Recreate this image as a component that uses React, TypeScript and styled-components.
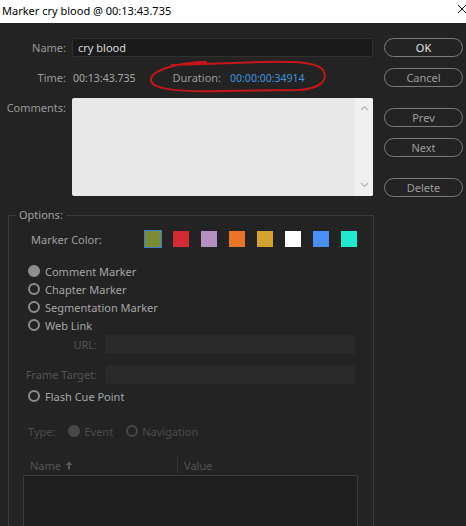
import React from 'react';
import styled, { createGlobalStyle } from 'styled-components';

const Global = createGlobalStyle`
  html, body {
    margin: 0;
    background: #232323;
  }
  body {
    font-family: "Noto Sans", "Open Sans", sans-serif;
    font-size: 11px;
  }
`;

// cores dos marcadores
const cores = ['#7b8c34', '#d42a36', '#b390bf', '#ea7529', '#d4a22c', '#ffffff', '#4a8ef6', '#1fe9cf'];

const tipos = ['Comment Marker', 'Chapter Marker', 'Segmentation Marker', 'Web Link'];

const App: React.FC = () => {
  return (
    <Window>
      <Global />
      <TitleBar>
        <Title>Marker cry blood @ 00:13:43.735</Title>
        <svg width="10" height="10" viewBox="0 0 10 10">
          <path d="M1 1 L9 9 M9 1 L1 9" stroke="#111" strokeWidth="1" />
        </svg>
      </TitleBar>

      <Body>
        <Top>
          <Form>
            <Row>
              <Label>Name:</Label>
              <NameInput defaultValue="cry blood" />
            </Row>
            <Row>
              <Label>Time:</Label>
              <TimeValue>00:13:43.735</TimeValue>
              <DurationLabel>Duration:</DurationLabel>
              <DurationValue>00:00:00:34914</DurationValue>
            </Row>
            <Row $top>
              <Label $pad>Comments:</Label>
              <Comments>
                <CommentText />
                <ScrollBar>
                  <svg width="9" height="6" viewBox="0 0 9 6">
                    <path d="M1 5 L4.5 1.5 L8 5" stroke="#b5b5b5" fill="none" strokeWidth="1.2" />
                  </svg>
                  <svg width="9" height="6" viewBox="0 0 9 6">
                    <path d="M1 1 L4.5 4.5 L8 1" stroke="#b5b5b5" fill="none" strokeWidth="1.2" />
                  </svg>
                </ScrollBar>
              </Comments>
            </Row>
          </Form>

          <Buttons>
            <PillButton $primary>OK</PillButton>
            <PillButton>Cancel</PillButton>
            <PillButton $space>Prev</PillButton>
            <PillButton>Next</PillButton>
            <PillButton $space>Delete</PillButton>
          </Buttons>
        </Top>

        <Options>
          <Legend>Options:</Legend>

          <ColorRow>
            <ColorLabel>Marker Color:</ColorLabel>
            {cores.map((c, i) => (
              <Swatch key={c} $cor={c} $ativo={i === 0} />
            ))}
          </ColorRow>

          <RadioList>
            {tipos.map((t, i) => (
              <RadioRow key={t}>
                <Radio $cheio={i === 0} />
                <span>{t}</span>
              </RadioRow>
            ))}
          </RadioList>

          <InputRow>
            <SmallLabel>URL:</SmallLabel>
            <DimInput />
          </InputRow>
          <InputRow $gap={11}>
            <SmallLabel>Frame Target:</SmallLabel>
            <DimInput />
          </InputRow>

          <RadioRow $mt={3}>
            <Radio />
            <span>Flash Cue Point</span>
          </RadioRow>

          <TypeRow>
            <span>Type:</span>
            <TypeOption>
              <Radio $cheio $apagado />
              <span>Event</span>
            </TypeOption>
            <TypeOption>
              <Radio $apagado />
              <span>Navigation</span>
            </TypeOption>
          </TypeRow>

          <TableHead>
            <HeadCell $w={147}>
              Name
              <svg width="8" height="9" viewBox="0 0 8 9">
                <path d="M4 0.5 L7.5 4 L5 4 L5 8.5 L3 8.5 L3 4 L0.5 4 Z" fill="#5a5a5a" />
              </svg>
            </HeadCell>
            <HeadCell $divider>Value</HeadCell>
          </TableHead>
          <Table />
        </Options>
      </Body>

      {/* marcação vermelha feita à mão sobre a duração */}
      <Annotation width="466" height="526" viewBox="0 0 466 526">
        <path
          d="M206 62 C182 62 153 69 151 79 C149 89 176 92 222 91 L298 90 C321 89 327 80 324 72 C321 63 300 61 262 62 L172 65"
          stroke="#c6161c"
          strokeWidth="2"
          fill="none"
          strokeLinecap="round"
        />
      </Annotation>
    </Window>
  );
};

export default App;

const Window = styled.div`
  position: relative;
  width: 466px;
  height: 526px;
  overflow: hidden;
  background: #232323;
`;

const TitleBar = styled.div`
  height: 23px;
  background: #ffffff;
  display: flex;
  align-items: center;
  justify-content: space-between;
  padding: 0 0 0 2px;
  box-sizing: border-box;
  svg {
    margin-right: -1px;
    margin-top: -6px;
  }
`;

const Title = styled.span`
  font-family: "Noto Sans", sans-serif;
  font-size: 11px;
  color: #000;
  margin-top: -2px;
`;

const Body = styled.div`
  padding-top: 15px;
`;

const Top = styled.div`
  display: flex;
  align-items: flex-start;
`;

const Form = styled.div`
  width: 373px;
  display: flex;
  flex-direction: column;
  gap: 11px;
`;

const Row = styled.div<{ $top?: boolean }>`
  display: flex;
  align-items: ${(p) => (p.$top ? 'flex-start' : 'center')};
  height: ${(p) => (p.$top ? '98px' : '19px')};
`;

const Label = styled.span<{ $pad?: boolean }>`
  width: 66px;
  padding-right: 6px;
  box-sizing: content-box;
  text-align: right;
  color: #9a9a9a;
  padding-top: ${(p) => (p.$pad ? '2px' : '0')};
`;

const NameInput = styled.input`
  flex: 1;
  height: 19px;
  box-sizing: border-box;
  background: #1a1a1a;
  border: 1px solid #303030;
  border-radius: 2px;
  color: #d8d8d8;
  font: inherit;
  padding: 0 5px;
  outline: none;
`;

const TimeValue = styled.span`
  color: #a8a8a8;
  margin-left: 1px;
  font-size: 10.5px;
`;

const DurationLabel = styled.span`
  color: #9a9a9a;
  margin-left: 37px;
`;

const DurationValue = styled.span`
  color: #3f93dd;
  margin-left: 9px;
  font-size: 10.5px;
`;

const Comments = styled.div`
  flex: 1;
  height: 98px;
  display: flex;
  background: #e8e8e8;
  border-radius: 2px;
  overflow: hidden;
`;

const CommentText = styled.div`
  flex: 1;
`;

const ScrollBar = styled.div`
  width: 18px;
  background: #f0f0f0;
  display: flex;
  flex-direction: column;
  justify-content: space-between;
  align-items: center;
  padding: 7px 0 8px;
`;

const Buttons = styled.div`
  margin-left: 11px;
  display: flex;
  flex-direction: column;
  gap: 11px;
`;

const PillButton = styled.button<{ $primary?: boolean; $space?: boolean }>`
  width: 79px;
  height: 19px;
  margin-top: ${(p) => (p.$space ? '10px' : '0')};
  background: transparent;
  border: 1px solid #7c7c7c;
  border-radius: 10px;
  color: ${(p) => (p.$primary ? '#e6e6e6' : '#9c9c9c')};
  font-family: "Noto Sans", sans-serif;
  font-size: 11px;
  padding: 0;
  line-height: 17px;
`;

const Options = styled.fieldset`
  margin: 11px 0 0 8px;
  width: 366px;
  box-sizing: border-box;
  border: 1px solid #3a3a3a;
  border-bottom: none;
  padding: 8px 0 0 1px;
  min-height: 320px;
`;

const Legend = styled.legend`
  color: #a2a2a2;
  padding: 0 3px;
  margin-left: 6px;
  line-height: 14px;
`;

const ColorRow = styled.div`
  display: flex;
  align-items: center;
  height: 18px;
  padding-left: 21px;
  gap: 12px;
`;

const ColorLabel = styled.span`
  color: #a0a0a0;
  width: 102px;
`;

const Swatch = styled.div<{ $cor: string; $ativo?: boolean }>`
  width: 16px;
  height: 16px;
  background: ${(p) => p.$cor};
  box-shadow: ${(p) => (p.$ativo ? '0 0 0 1px #3b7fd0' : 'none')};
`;

const RadioList = styled.div`
  margin-top: 14px;
  display: flex;
  flex-direction: column;
`;

const RadioRow = styled.div<{ $mt?: number }>`
  display: flex;
  align-items: center;
  height: 18px;
  gap: 5px;
  padding-left: 18px;
  margin-top: ${(p) => p.$mt ?? 0}px;
  color: #a6a6a6;
`;

const Radio = styled.span<{ $cheio?: boolean; $apagado?: boolean }>`
  width: 12px;
  height: 12px;
  box-sizing: border-box;
  border-radius: 50%;
  border: 2px solid ${(p) => (p.$apagado ? '#484848' : '#8e8e8e')};
  background: ${(p) => (p.$cheio ? (p.$apagado ? '#484848' : '#8e8e8e') : 'transparent')};
`;

const InputRow = styled.div<{ $gap?: number }>`
  display: flex;
  align-items: center;
  margin-top: ${(p) => p.$gap ?? 1}px;
  gap: 8px;
`;

const SmallLabel = styled.span`
  width: 87px;
  text-align: right;
  color: #545454;
`;

const DimInput = styled.div`
  width: 250px;
  height: 19px;
  background: #2a2a2a;
  border-radius: 2px;
`;

const TypeRow = styled.div`
  display: flex;
  align-items: center;
  height: 18px;
  margin-top: 17px;
  padding-left: 18px;
  gap: 13px;
  color: #4c4c4c;
`;

const TypeOption = styled.div`
  display: flex;
  align-items: center;
  gap: 4px;
`;

const TableHead = styled.div`
  display: flex;
  align-items: center;
  height: 16px;
  margin-top: 17px;
  padding-left: 20px;
  color: #545454;
`;

const HeadCell = styled.div<{ $w?: number; $divider?: boolean }>`
  display: flex;
  align-items: center;
  gap: 4px;
  width: ${(p) => (p.$w ? `${p.$w}px` : 'auto')};
  height: 100%;
  border-left: ${(p) => (p.$divider ? '1px solid #333' : 'none')};
  padding-left: ${(p) => (p.$divider ? '6px' : '0')};
`;

const Table = styled.div`
  margin: 2px 0 0 13px;
  width: 335px;
  height: 90px;
  box-sizing: border-box;
  background: #1e1e1e;
  border: 1px solid #3a3a3a;
  border-radius: 0 2px 0 0;
`;

const Annotation = styled.svg`
  position: absolute;
  left: 0;
  top: 0;
  pointer-events: none;
`;
